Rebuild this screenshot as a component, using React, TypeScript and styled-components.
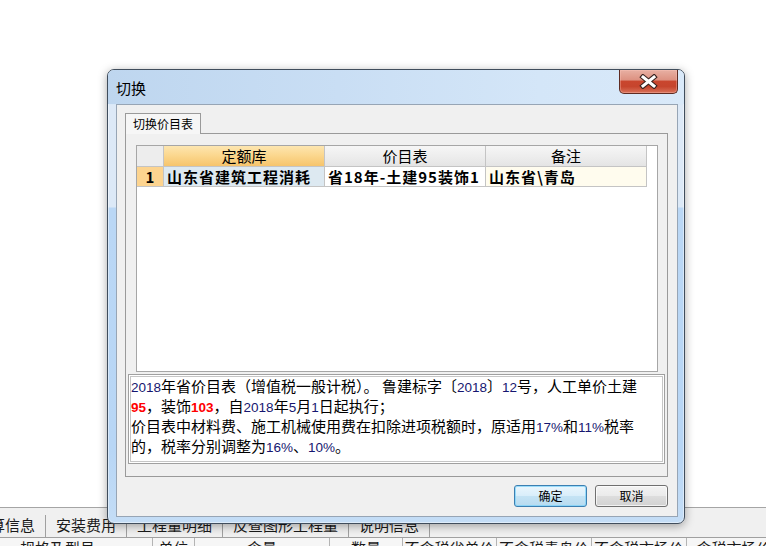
import React from "react";
import styled, { createGlobalStyle } from "styled-components";

const CJK = `"Noto Sans CJK SC", "Noto Sans", sans-serif`;

const GlobalStyle = createGlobalStyle`
  html, body {
    margin: 0;
    padding: 0;
    background: #fff;
  }
  body {
    font-family: ${CJK};
  }
`;

const Screen = styled.div`
  position: relative;
  width: 766px;
  height: 546px;
  overflow: hidden;
  background: #fff;
`;

/* the application window behind the dialog */
const Backdrop = styled.div`
  display: flex;
  flex-direction: column;
`;

const Blank = styled.div`
  height: 507px;
  flex-shrink: 0;
  background: #fff;
`;

const BottomTabs = styled.div`
  height: 29px;
  flex-shrink: 0;
  border-top: 1px solid #a5a5a5;
  background: #f0f0f0;
  display: flex;
  align-items: flex-end;
`;

const BottomTab = styled.div<{ $first?: boolean }>`
  height: 22px;
  padding: 0 10px;
  margin-left: ${({ $first }) => ($first ? "-35px" : "0")};
  border-right: 1px solid #a0a0a0;
  font: 15px/20px ${CJK};
  color: #1a1a1a;
  white-space: nowrap;
  flex-shrink: 0;
`;

const ColumnHeads = styled.div`
  display: grid;
  grid-template-columns: 190px 42px 135px 73px 94px 95px 95px 95px;
  margin-left: -37px;
  height: 24px;
  flex-shrink: 0;
  border-top: 1px solid #a0a0a0;
  background: #f6f6f6;
`;

const ColumnHead = styled.div`
  box-sizing: border-box;
  border-right: 1px solid #b4b4b4;
  text-align: center;
  font: 15px/20px ${CJK};
  color: #1a1a1a;
  white-space: nowrap;
  overflow: hidden;
`;

/* the dialog window */
const Dialog = styled.div`
  position: absolute;
  left: 107px;
  top: 69px;
  width: 578px;
  height: 455px;
  box-sizing: border-box;
  border: 1px solid #404d5c;
  border-radius: 7px;
  padding: 0 6px 6px 8px;
  display: flex;
  flex-direction: column;
  background: linear-gradient(
    180deg,
    #cbe0f5 0px,
    #d6e7f8 34px,
    #dde9f7 35px,
    #dce9f7 137px,
    #bad7f5 138px,
    #b8d6f5 380px,
    #c4ddf6 100%
  );
  box-shadow: inset 0 0 0 1px rgba(255, 255, 255, 0.45),
    0 2px 10px rgba(0, 0, 0, 0.35);
`;

const TitleBar = styled.div`
  height: 34px;
  flex-shrink: 0;
  display: flex;
  align-items: flex-start;
  margin: 0 -6px 0 -8px;
  padding: 0 6px 0 8px;
  border-radius: 6px 6px 0 0;
  background: linear-gradient(90deg, #bed6ef 0%, #c9def4 40%, #d4e6f8 75%, #d9e9f9 100%);
`;

const Title = styled.div`
  margin-top: 8px;
  font: 15px/20px ${CJK};
  color: #000;
`;

const CloseButton = styled.div`
  margin-left: auto;
  width: 59px;
  height: 24px;
  box-sizing: border-box;
  border: 1px solid #5e2b22;
  border-top: none;
  border-radius: 0 0 5px 5px;
  display: flex;
  align-items: center;
  justify-content: center;
  background: linear-gradient(
    180deg,
    #e8b0a3 0%,
    #dd9282 42%,
    #c9462e 50%,
    #c6452d 72%,
    #d9725a 100%
  );
  box-shadow: inset 0 0 0 1px rgba(255, 200, 190, 0.35);
`;

const Client = styled.div`
  flex: 1;
  border: 1px solid #97a5b5;
  background: #f0f0f0;
  padding: 8px 9px 9px 8px;
  display: flex;
  flex-direction: column;
`;

const TabStrip = styled.div`
  display: flex;
  height: 20px;
  flex-shrink: 0;
  position: relative;
  z-index: 1;
`;

const Tab = styled.div`
  width: 76px;
  height: 21px;
  box-sizing: border-box;
  border: 1px solid #9a9a9a;
  border-bottom: none;
  background: #f6f6f6;
  font: 12px/19px ${CJK};
  color: #000;
  text-align: center;
`;

const Panel = styled.div`
  height: 344px;
  flex-shrink: 0;
  box-sizing: border-box;
  border: 1px solid #9a9a9a;
  background: #f0f0f0;
  padding: 11px 2px 12px 2px;
  display: flex;
  flex-direction: column;
`;

const GridBox = styled.div`
  height: 227px;
  flex-shrink: 0;
  box-sizing: border-box;
  margin: 0 7px 0 8px;
  border: 1px solid #a6a6a6;
  background: #fff;
`;

const GridRow = styled.div<{ $height: number }>`
  display: grid;
  grid-template-columns: 27px 161px 161px 161px;
  height: ${({ $height }) => $height}px;
`;

type CellKind = "corner" | "active" | "head" | "num" | "key" | "plain" | "note";

const cellBackground: Record<CellKind, string> = {
  corner: "#ededed",
  active: "linear-gradient(180deg, #fde6b0 0%, #fbd68c 50%, #f6c46c 100%)",
  head: "linear-gradient(180deg, #f6f6f6 0%, #ececec 60%, #e4e4e4 100%)",
  num: "#fdd48f",
  key: "#dde9f1",
  plain: "#fff",
  note: "#fffcee",
};

const Cell = styled.div<{ $kind: CellKind }>`
  box-sizing: border-box;
  border-right: 1px solid #c4c4c4;
  border-bottom: 1px solid #c4c4c4;
  background: ${({ $kind }) => cellBackground[$kind]};
  font-family: ${CJK};
  font-size: 15px;
  line-height: 19px;
  color: #000;
  white-space: nowrap;
  overflow: hidden;
  ${({ $kind }) =>
    $kind === "corner" || $kind === "active" || $kind === "head"
      ? "text-align: center; font-weight: 400;"
      : $kind === "num"
      ? "text-align: center; font-weight: 700;"
      : "padding-left: 3px; font-weight: 700; letter-spacing: 1px;"}
`;

const Description = styled.div`
  height: 90px;
  flex-shrink: 0;
  box-sizing: border-box;
  margin-top: 2px;
  border: 1px solid #a0a0a0;
  background: #fff;
  box-shadow: inset 0 0 0 1px #fff, inset 0 0 0 2px #c6c6c6;
  padding: 1px 2px;
  font: 15px/20px ${CJK};
  color: #000;
  white-space: nowrap;
  overflow: hidden;
`;

const Line = styled.div`
  height: 20px;
  line-height: 20px;
`;

const Num = styled.span<{ $red?: boolean }>`
  font-family: "Liberation Sans", Arial, sans-serif;
  font-size: 13.5px;
  line-height: 1;
  color: ${({ $red }) => ($red ? "#ff0000" : "#161670")};
  font-weight: ${({ $red }) => ($red ? 700 : 400)};
`;

const ButtonRow = styled.div`
  display: flex;
  justify-content: flex-end;
  gap: 8px;
  margin-top: 8px;
`;

const Button = styled.button<{ $primary?: boolean }>`
  width: 73px;
  height: 22px;
  box-sizing: border-box;
  padding: 0;
  border-radius: 3px;
  font: 12px/18px ${CJK};
  color: #000;
  border: 1px solid ${({ $primary }) => ($primary ? "#3c7fb1" : "#707070")};
  background: ${({ $primary }) =>
    $primary
      ? "linear-gradient(180deg, #eaf6fd 0%, #d9eefa 48%, #c4e3f4 52%, #b8dbf0 100%)"
      : "linear-gradient(180deg, #f3f3f3 0%, #ebebeb 48%, #dddddd 52%, #d2d2d2 100%)"};
  box-shadow: inset 0 0 0 1px
    ${({ $primary }) => ($primary ? "rgba(120, 210, 250, 0.7)" : "rgba(255, 255, 255, 0.7)")};
`;

const bottomTabs = ["换算信息", "安装费用", "工程量明细", "反查图形工程量", "说明信息"];
const columnHeads = [
  "规格及型号",
  "单位",
  "含量",
  "数量",
  "不含税省单价",
  "不含税青岛价",
  "不含税市场价",
  "含税市场价",
];

const CloseIcon = () => (
  <svg width="19" height="15" viewBox="0 0 19 15">
    <path d="M4 3 L15 12 M15 3 L4 12" stroke="#3a2420" strokeWidth="5.2" strokeLinecap="square" />
    <path d="M4 3 L15 12 M15 3 L4 12" stroke="#fff" strokeWidth="3" strokeLinecap="square" />
  </svg>
);

const App = () => {
  return (
    <Screen>
      <GlobalStyle />
      <Backdrop>
        <Blank />
        <BottomTabs>
          {bottomTabs.map((label, index) => (
            <BottomTab key={label} $first={index === 0}>
              {label}
            </BottomTab>
          ))}
        </BottomTabs>
        <ColumnHeads>
          {columnHeads.map((label) => (
            <ColumnHead key={label}>{label}</ColumnHead>
          ))}
        </ColumnHeads>
      </Backdrop>

      <Dialog>
        <TitleBar>
          <Title>切换</Title>
          <CloseButton>
            <CloseIcon />
          </CloseButton>
        </TitleBar>
        <Client>
          <TabStrip>
            <Tab>切换价目表</Tab>
          </TabStrip>
          <Panel>
            <GridBox>
              <GridRow $height={21}>
                <Cell $kind="corner" />
                <Cell $kind="active">定额库</Cell>
                <Cell $kind="head">价目表</Cell>
                <Cell $kind="head">备注</Cell>
              </GridRow>
              <GridRow $height={20}>
                <Cell $kind="num">1</Cell>
                <Cell $kind="key">山东省建筑工程消耗</Cell>
                <Cell $kind="plain">省18年-土建95装饰1</Cell>
                <Cell $kind="note">山东省\青岛</Cell>
              </GridRow>
            </GridBox>
            <Description>
              <Line>
                <Num>2018</Num>年省价目表（增值税一般计税）。 鲁建标字〔<Num>2018</Num>〕<Num>12</Num>号，人工单价土建
              </Line>
              <Line>
                <Num $red>95</Num>，装饰<Num $red>103</Num>，自<Num>2018</Num>年<Num>5</Num>月<Num>1</Num>日起执行；
              </Line>
              <Line>
                价目表中材料费、施工机械使用费在扣除进项税额时，原适用<Num>17%</Num>和<Num>11%</Num>税率
              </Line>
              <Line>
                的，税率分别调整为<Num>16%</Num>、<Num>10%</Num>。
              </Line>
            </Description>
          </Panel>
          <ButtonRow>
            <Button $primary>确定</Button>
            <Button>取消</Button>
          </ButtonRow>
        </Client>
      </Dialog>
    </Screen>
  );
};

export default App;
